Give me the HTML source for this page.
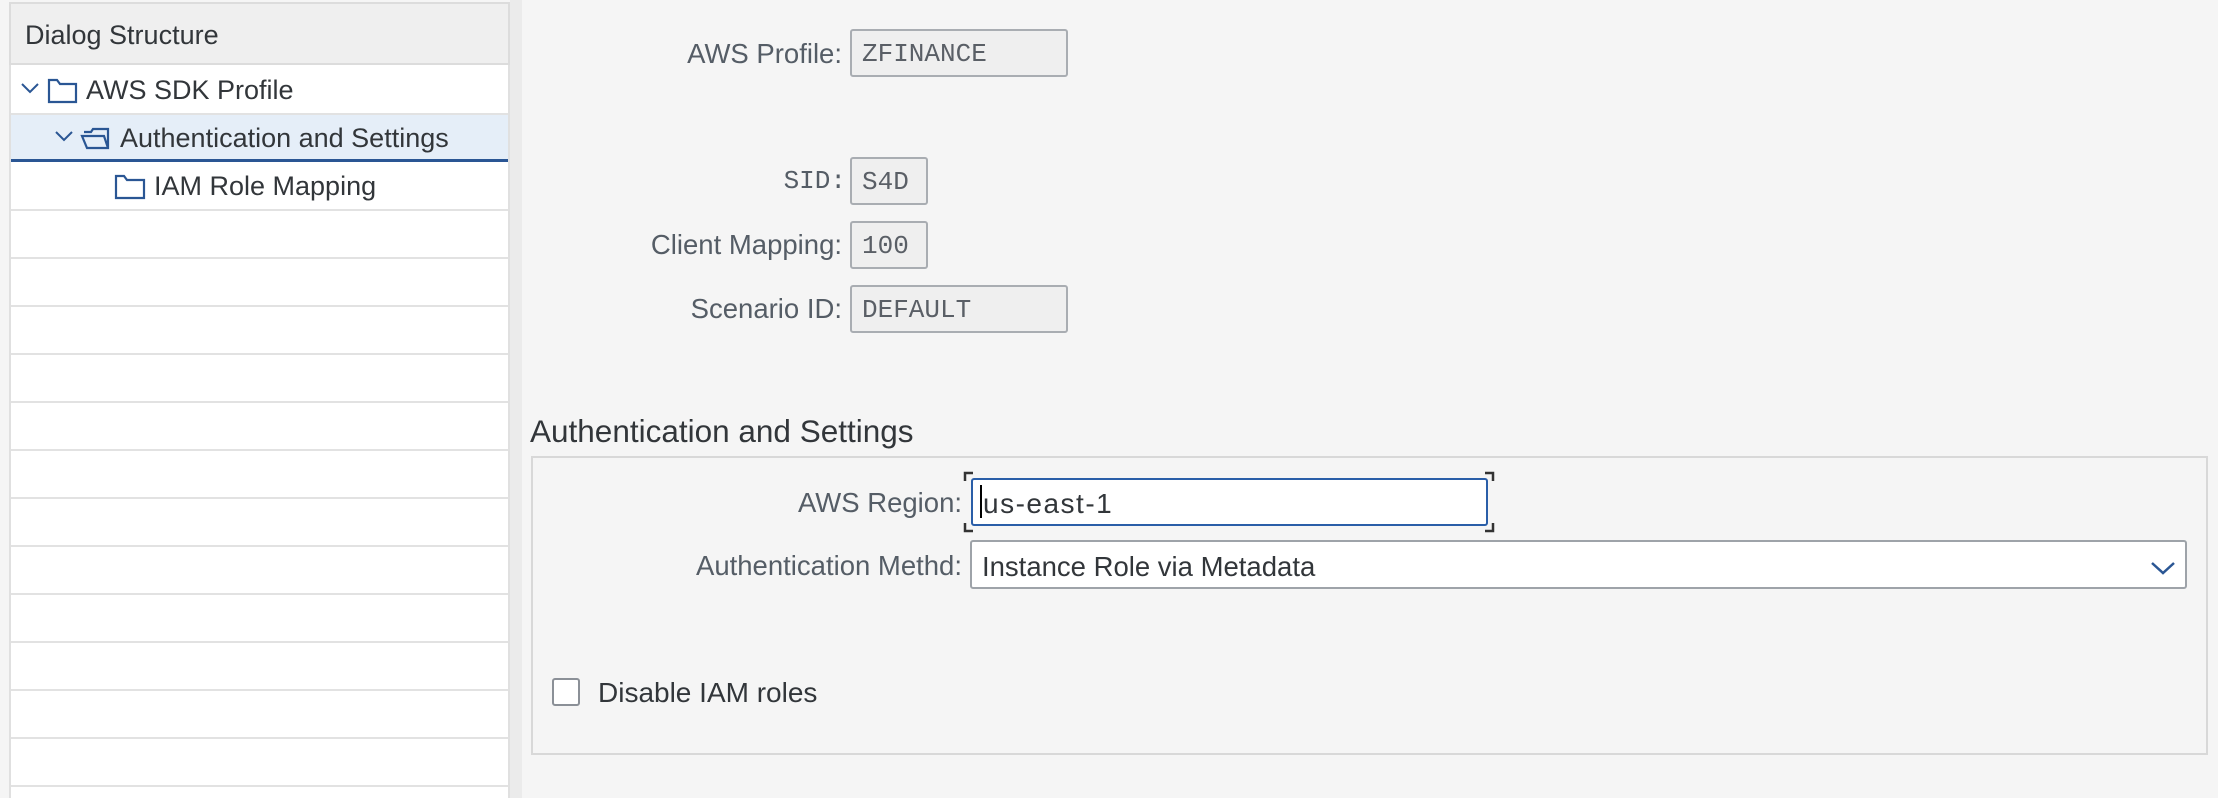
<!DOCTYPE html>
<html><head><meta charset="utf-8"><style>
*{box-sizing:border-box;margin:0;padding:0}
body{width:2218px;height:798px;overflow:hidden;background:#f5f5f5;font-family:"Liberation Sans",sans-serif;position:relative}
.a{position:absolute}
.lp{left:9px;top:2px;width:501px;height:796px;background:#fff;border-left:2px solid #e0e0e0;border-right:2px solid #e0e0e0}
.hd{left:9px;top:2px;width:501px;height:63px;background:#efefef;border:2px solid #dcdcdc;font-size:27px;color:#32363a;padding:16px 0 0 14px}
.ln{left:11px;width:497px;height:2px;background:#e2e2e2}
.gut{left:510px;top:0;width:12px;height:798px;background:#ebebeb}
.tr{font-size:27px;color:#32363a}
.lab{font-size:27.5px;color:#555d66;text-align:right}
.ro{background:#efefef;border:2px solid #a9adb2;border-radius:3px;font-family:"Liberation Mono",monospace;font-size:26px;color:#5a5f66;padding:8px 0 0 10px}
</style></head><body>
<div class="a gut"></div>
<div class="a lp"></div>
<div class="a hd">Dialog Structure</div>
<div class="a" style="left:11px;top:113px;width:497px;height:48px;background:#e5eef8"></div>
<div class="a" style="left:11px;top:159px;width:497px;height:3px;background:#2a5694"></div>
<div class="a ln" style="top:113px"></div>
<div class="a ln" style="top:209px"></div><div class="a ln" style="top:257px"></div><div class="a ln" style="top:305px"></div><div class="a ln" style="top:353px"></div><div class="a ln" style="top:401px"></div><div class="a ln" style="top:449px"></div><div class="a ln" style="top:497px"></div><div class="a ln" style="top:545px"></div><div class="a ln" style="top:593px"></div><div class="a ln" style="top:641px"></div><div class="a ln" style="top:689px"></div><div class="a ln" style="top:737px"></div><div class="a ln" style="top:785px"></div>
<svg class="a" style="left:20px;top:76px" width="60" height="30"><path d="M2 8 L10 16 L18 8" fill="none" stroke="#2a5694" stroke-width="2"/><path d="M29 4 H37 L40 8 H56 V26 H29 Z" fill="none" stroke="#2a5694" stroke-width="2.2"/></svg>
<div class="a tr" style="left:86px;top:75px">AWS SDK Profile</div>
<svg class="a" style="left:54px;top:124px" width="60" height="30"><path d="M2 8 L10 16 L18 8" fill="none" stroke="#2a5694" stroke-width="2"/><path d="M30 8 H37 L39 5 H54 V24 H33 L28 12 H50 L54 24" fill="none" stroke="#2a5694" stroke-width="2.2"/></svg>
<div class="a tr" style="left:120px;top:123px">Authentication and Settings</div>
<svg class="a" style="left:114px;top:172px" width="34" height="30"><path d="M2 4 H10 L13 8 H30 V26 H2 Z" fill="none" stroke="#2a5694" stroke-width="2.2"/></svg>
<div class="a tr" style="left:154px;top:171px">IAM Role Mapping</div>

<div class="a lab" style="left:500px;width:342px;top:38px">AWS Profile:</div>
<div class="a ro" style="left:850px;top:29px;width:218px;height:48px">ZFINANCE</div>
<div class="a lab" style="left:500px;width:346px;top:166px;font-family:'Liberation Mono',monospace;font-size:26px">SID:</div>
<div class="a ro" style="left:850px;top:157px;width:78px;height:48px">S4D</div>
<div class="a lab" style="left:500px;width:342px;top:229px">Client Mapping:</div>
<div class="a ro" style="left:850px;top:221px;width:78px;height:48px">100</div>
<div class="a lab" style="left:500px;width:342px;top:293px">Scenario ID:</div>
<div class="a ro" style="left:850px;top:285px;width:218px;height:48px">DEFAULT</div>

<div class="a" style="left:530px;top:413px;font-size:31.5px;color:#32363a">Authentication and Settings</div>
<div class="a" style="left:531px;top:456px;width:1677px;height:299px;border:2px solid #d8d8d8"></div>
<div class="a lab" style="left:600px;width:362px;top:487px">AWS Region:</div>
<svg class="a" style="left:963px;top:471px" width="532" height="62"><path d="M2 10 V2 H10 M522 2 H530 V10 M530 52 V60 H522 M10 60 H2 V52" fill="none" stroke="#333" stroke-width="2.5"/></svg>
<div class="a" style="left:971px;top:478px;width:517px;height:48px;background:#fff;border:2px solid #2a5ea8;border-radius:3px;font-size:28px;letter-spacing:1.5px;color:#32363a;padding:8px 0 0 10px">us-east-1</div>
<div class="a" style="left:980px;top:485px;width:2px;height:33px;background:#000"></div>
<div class="a lab" style="left:600px;width:362px;top:550px">Authentication Methd:</div>
<div class="a" style="left:970px;top:540px;width:1217px;height:49px;background:#fff;border:2px solid #9ea3a9;border-radius:3px;font-size:27.5px;color:#32363a;padding:9px 0 0 10px">Instance Role via Metadata</div>
<svg class="a" style="left:2150px;top:558px" width="28" height="20"><path d="M2 5 L13 15 L24 5" fill="none" stroke="#2a5694" stroke-width="2.5"/></svg>
<div class="a" style="left:552px;top:678px;width:28px;height:28px;background:#fff;border:2px solid #8b9097;border-radius:3px"></div>
<div class="a" style="left:598px;top:677px;font-size:28px;color:#32363a">Disable IAM roles</div>
</body></html>
